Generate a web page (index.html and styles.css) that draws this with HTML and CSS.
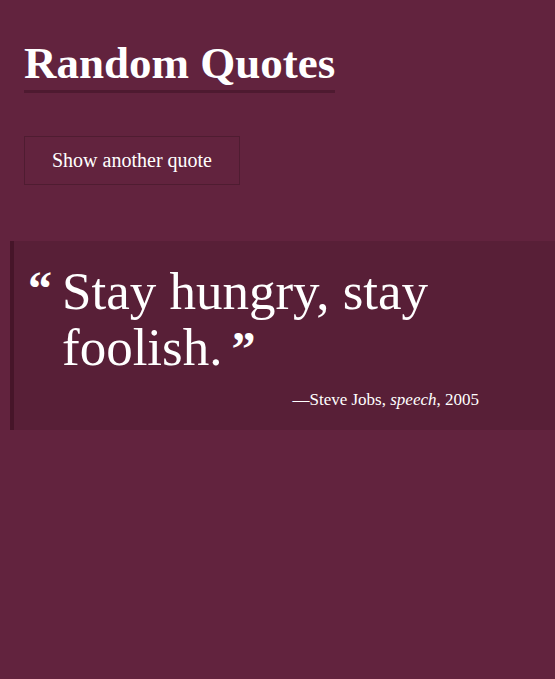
FILE: index.html
```html
<!DOCTYPE html>
<html>
<head>
<meta charset="utf-8">
<link rel="stylesheet" href="styles.css">
</head>
<body>
<main class="page">
  <h1 class="title">Random Quotes</h1>
  <button class="btn">Show another quote</button>
  <blockquote class="quote">
    <p class="quote-text"><span class="mark open">“</span>Stay hungry, stay foolish.<span class="mark close">”</span></p>
    <p class="cite">—Steve Jobs, <em>speech</em>, 2005</p>
  </blockquote>
</main>
</body>
</html>
```
FILE: styles.css
```css
html, body {
  margin: 0;
  padding: 0;
  background: #62233e;
  height: 100%;
  overflow: hidden;
}
.page {
  padding: 38px 0 0 24px;
  font-family: "Liberation Serif", serif;
  color: #fff;
}
.title {
  display: inline-block;
  margin: 0;
  font-size: 45px;
  font-weight: bold;
  line-height: 50px;
  padding-bottom: 2px;
  border-bottom: 3px solid #4e1a30;
}
.btn {
  display: block;
  margin-top: 43px;
  width: 216px;
  height: 49px;
  background: #62233e;
  border: 1px solid #4f1c31;
  color: #fff;
  font-family: "Liberation Serif", serif;
  font-size: 20px;
  padding: 0;
}
.quote {
  margin: 56px 0 0 -14px;
  background: #581f37;
  border-left: 4px solid #461529;
  padding: 22px 0 20px 48px;
}
.quote-text {
  margin: 0;
  font-size: 53px;
  line-height: 56px;
  position: relative;
  width: 400px;
}
.mark {
  font-weight: bold;
}
.open {
  position: absolute;
  left: -34px;
  top: -2px;
  font-size: 48px;
}
.close {
  display: inline-block;
  font-size: 48px;
  line-height: 40px;
  margin-left: 9px;
}
.cite {
  margin: 15px 0 0;
  text-align: right;
  padding-right: 76px;
  font-size: 17px;
}
```
